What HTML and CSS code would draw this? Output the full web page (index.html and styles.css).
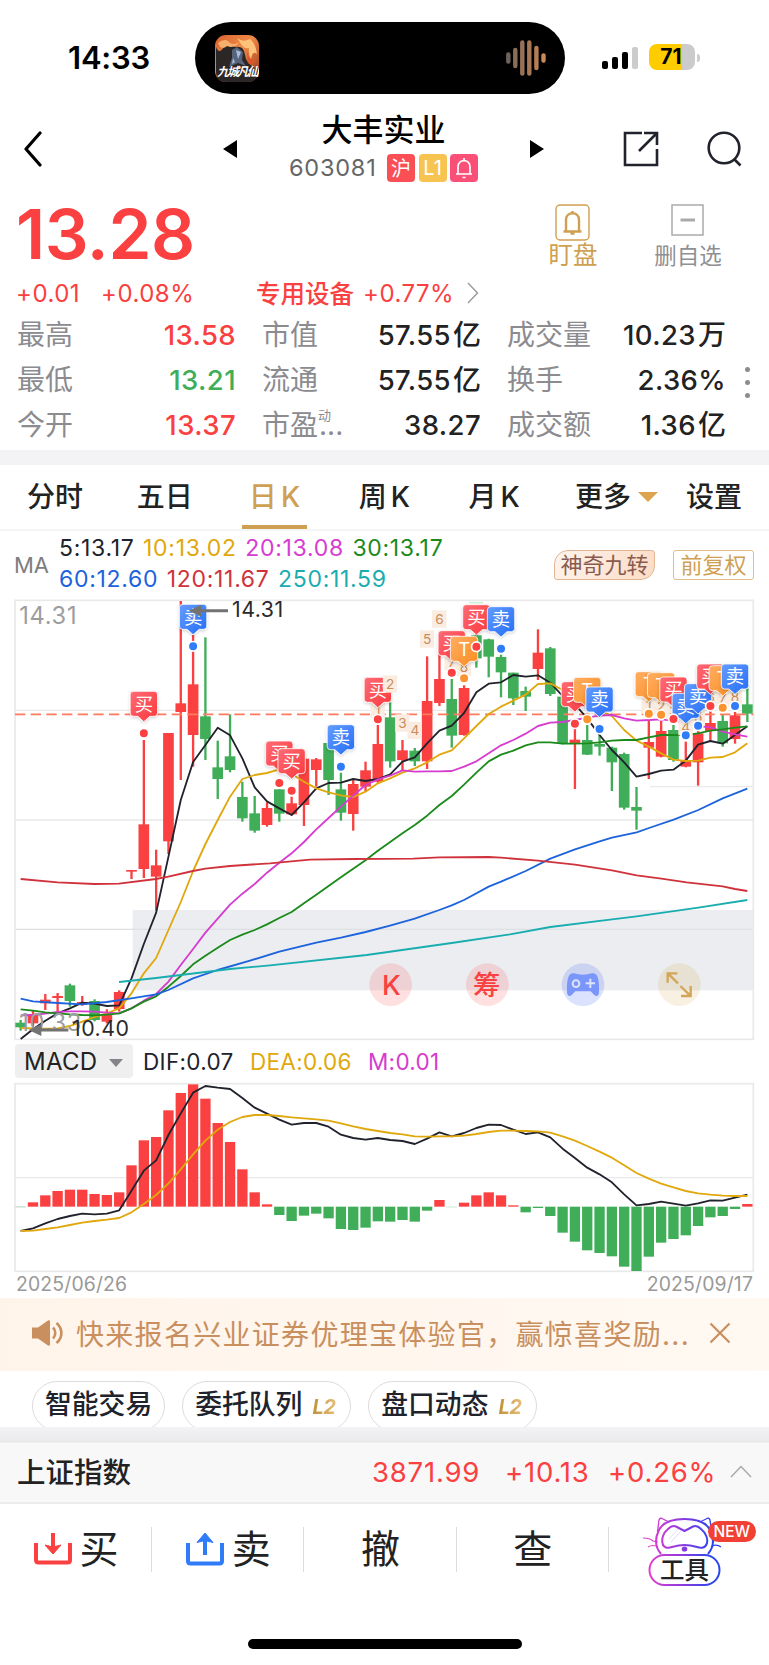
FILE: index.html
```html
<!DOCTYPE html>
<html lang="zh-CN">
<head>
    <meta charset="UTF-8">
    <meta name="viewport" content="width=device-width, initial-scale=1.0">
    <title>大丰实业 603081</title>
    <link rel="stylesheet" href="styles.css">
</head>
<body>
    <div class="status-bar">
        <div class="time">14:33</div>
        <div class="island">
            <svg class="app-icon" viewBox="0 0 44 47">
                <defs>
                    <linearGradient id="fire" x1="0" y1="0" x2="1" y2="1">
                        <stop offset="0" stop-color="#d9632f"/>
                        <stop offset="0.45" stop-color="#f08a48"/>
                        <stop offset="1" stop-color="#8f3219"/>
                    </linearGradient>
                </defs>
                <rect width="44" height="47" rx="11" fill="url(#fire)"/>
                <path d="M1 12Q4 20 9 12Q16 9 20 12Q29 10 30 20Q31 30 43 34V37Q42 47 33 47H11Q1 47 1 36Z" fill="#2b2727"/>
                <path d="M3 8Q9 3 13 6Q17 12 24 7Q20 14 12 11Q6 16 3 8" fill="#f6b06e"/>
                <path d="M22 3Q28 8 35 4Q41 9 42 19Q37 15 36 25Q33 19 34 13Q29 14 26 9Z" fill="#ffc27a"/>
                <path d="M32 17Q35 26 40 25Q38 31 33 28Z" fill="#e0562b"/>
                <path d="M17 15L22 12L28 17L27 25L31 31L23 28L14 32L17 23Z" fill="#56647c"/>
                <path d="M21 15L26 17L23 24ZM18 23L20 27L17 29Z" fill="#a9bdd8"/>
                <text x="2" y="41" class="app-name">九城凡仙</text>
            </svg>
            <svg class="wave" viewBox="0 0 40 36">
                <g stroke-width="4.4" stroke-linecap="round">
                    <path d="M2.3 14.5V21.5" stroke="#6d625c"/>
                    <path d="M9.3 10V26" stroke="#8a6d59"/>
                    <path d="M16.3 2.5V33.5" stroke="#987158"/>
                    <path d="M23.3 2.5V33.5" stroke="#a77856"/>
                    <path d="M30.4 8V28" stroke="#b67e55"/>
                    <path d="M37.5 15.5V20.5" stroke="#c88a58"/>
                </g>
            </svg>
        </div>
        <svg class="signal" viewBox="0 0 36 24">
            <rect x="0" y="15" width="6" height="8" rx="2"/>
            <rect x="10" y="11" width="6" height="12" rx="2"/>
            <rect x="20" y="6" width="6" height="17" rx="2"/>
            <rect x="30" y="1" width="6" height="22" rx="2" fill="#ccc"/>
        </svg>
        <div class="battery">71</div>
        <div class="battery-tip"></div>
    </div>

    <header class="nav">
        <svg class="back" viewBox="0 0 20 36"><path d="M17 2L3 18L17 34" fill="none" stroke="#000" stroke-width="3.2" stroke-linecap="round" stroke-linejoin="round"/></svg>
        <svg class="prev" viewBox="0 0 14 18"><path d="M14 0V18L0 9Z"/></svg>
        <div class="title">
            <h1>大丰实业</h1>
            <div class="code">
                <span>603081</span>
                <i class="tag red">沪</i>
                <i class="tag yellow">L1</i>
                <i class="tag pink">
                    <svg width="22" height="22" viewBox="0 0 22 22" fill="none" stroke="#fff" stroke-width="1.7"><path d="M3 17H19M5 17V10C5 1.500 17 1.500 17 10V17M11 1V4M9.500 20.500H12.500"/></svg>
                </i>
            </div>
        </div>
        <svg class="next" viewBox="0 0 14 18"><path d="M0 0V18L14 9Z"/></svg>
        <svg class="share" viewBox="0 0 36 36" fill="none" stroke="#20222c" stroke-width="2.6"><path d="M19 2H2V34H34V18M21 2H34V14M34 2L16 20"/></svg>
        <svg class="search" viewBox="0 0 36 36" fill="none" stroke="#20222c" stroke-width="2.6"><circle cx="17" cy="17" r="15.300"/><path d="M27.500 28.500L33.500 34.500"/></svg>
    </header>

    <section class="quote">
        <div class="quote-top">
            <div class="price">13.28</div>
            <div class="action watch">
                <svg width="36" height="38" viewBox="0 0 36 38" fill="none" stroke="#cfa052"><rect x="1" y="1" width="33" height="35" rx="4" stroke-width="1.400"/><path d="M8.500 27.500H26.500M11 27V16C11 7 24 7 24 16V27M17.500 7V10M15.500 29.500H19.500" stroke-width="2.400"/></svg>
                <span>盯盘</span>
            </div>
            <div class="action remove">
                <svg width="34" height="34" viewBox="0 0 34 34" fill="none" stroke="#aaa"><rect x="1" y="1" width="31" height="30" stroke-width="1.500"/><path d="M9.500 16H24" stroke-width="3"/></svg>
                <span>删自选</span>
            </div>
        </div>
        <div class="change">
            <span class="diff">+0.01</span>
            <span class="pct">+0.08%</span>
            <span class="sector">专用设备</span>
            <span class="sector-pct">+0.77%</span>
            <svg width="12" height="22" viewBox="0 0 12 22"><path d="M1 1L10.500 11L1 21" fill="none" stroke="#999" stroke-width="1.400"/></svg>
        </div>
        <div class="stats">
            <label>最高</label><b class="up">13.58</b>
            <label>市值</label><b>57.55<em>亿</em></b>
            <label>成交量</label><b>10.23<em>万</em></b>
            <label>最低</label><b class="down">13.21</b>
            <label>流通</label><b>57.55<em>亿</em></b>
            <label>换手</label><b>2.36%</b>
            <label>今开</label><b class="up">13.37</b>
            <label>市盈<sup>动</sup><span class="dots">...</span></label><b>38.27</b>
            <label>成交额</label><b>1.36<em>亿</em></b>
            <div class="more-dots"><i></i><i></i><i></i></div>
        </div>
    </section>

    <nav class="tabs">
        <a>分时</a>
        <a>五日</a>
        <a class="active">日<span>K</span></a>
        <a>周<span>K</span></a>
        <a>月<span>K</span></a>
        <a class="more">更多<i class="arrow"></i></a>
        <a class="setting">设置</a>
    </nav>

    <div class="ma-bar">
        <span class="ma-name">MA</span>
        <div class="ma-values">
            <div><span class="ma5">5:13.17</span><span class="ma10">10:13.02</span><span class="ma20">20:13.08</span><span class="ma30">30:13.17</span></div>
            <div><span class="ma60">60:12.60</span><span class="ma120">120:11.67</span><span class="ma250">250:11.59</span></div>
        </div>
        <span class="nine">神奇九转</span>
        <span class="adjust">前复权</span>
    </div>

    <svg class="kline" id="kline" viewBox="0 27 2307 1326"></svg>

    <div class="macd-bar">
        <div class="macd-select">MACD<i></i></div>
        <span class="dif">DIF:0.07</span>
        <span class="dea">DEA:0.06</span>
        <span class="m">M:0.01</span>
    </div>

    <svg class="macd" id="macd" viewBox="0 126 2307 573"></svg>

    <div class="dates"><span>2025/06/26</span><span>2025/09/17</span></div>

    <div class="notice">
        <svg class="horn" viewBox="0 0 32 28"><path d="M0 8.500H6L16 1.500C17 1 18 1.500 18 2.500V25.500C18 26.500 17 27 16 26.500L6 19.500H0Z" fill="#c98f5e"/><path d="M21 8.500C24 11.500 24 16.500 21 19.500M24.500 4C31 9.500 31 18.500 24.500 24" fill="none" stroke="#c98f5e" stroke-width="2.600"/></svg>
        <span class="notice-text">快来报名兴业证券优理宝体验官，赢惊喜奖励...</span>
        <svg class="close" viewBox="0 0 22 22"><path d="M1.500 1.500L20.500 20.500M20.500 1.500L1.500 20.500" stroke="#c98f5e" stroke-width="2.200"/></svg>
    </div>

    <div class="chips">
        <div class="chip">智能交易</div>
        <div class="chip">委托队列<i>L2</i></div>
        <div class="chip">盘口动态<i>L2</i></div>
    </div>

    <div class="index-bar">
        <span class="index-name">上证指数</span>
        <span class="index-value">3871.99</span>
        <span class="index-diff">+10.13</span>
        <span class="index-pct">+0.26%</span>
        <svg width="22" height="13" viewBox="0 0 22 13"><path d="M1 12L11 1.500L21 12" fill="none" stroke="#aaa" stroke-width="1.500"/></svg>
    </div>

    <footer class="toolbar">
        <div class="tool">
            <svg width="38" height="32" viewBox="0 0 38 32" fill="none" stroke="#fa4040" stroke-width="4"><path d="M2 10V27Q2 29.500 4.500 29.500H33.500Q36 29.500 36 27V10"/><path d="M19 0V14"/><path d="M11 12L19 21L27 12L19 14Z" fill="#fa4040" stroke-width="1"/></svg>
            <span>买</span>
        </div>
        <div class="tool">
            <svg width="38" height="34" viewBox="0 0 38 34" fill="none" stroke="#2f7bf8" stroke-width="4"><path d="M2 11V29Q2 31.500 4.500 31.500H33.500Q36 31.500 36 29V11"/><path d="M19 23V7"/><path d="M11 10.500L19 1L27 10.500L19 8.500Z" fill="#2f7bf8" stroke-width="1"/></svg>
            <span>卖</span>
        </div>
        <div class="tool"><span>撤</span></div>
        <div class="tool"><span>查</span></div>
        <div class="tool cat">
            <svg width="80" height="72" viewBox="0 0 80 72" fill="none" stroke="url(#neon)" stroke-width="2">
                <defs>
                    <linearGradient id="neon" gradientUnits="userSpaceOnUse" x1="4" y1="0" x2="76" y2="0">
                        <stop offset="0.05" stop-color="#e13bd0"/>
                        <stop offset="0.5" stop-color="#8a3be0"/>
                        <stop offset="0.9" stop-color="#2a45ee"/>
                    </linearGradient>
                </defs>
                <path d="M18 39C12 32 12 23 16 15C20 7 29 4 41.500 4S63 7 67 15C71 23 71 32 65 39"/>
                <path d="M14.500 17L16 5Q17 2 20 4L26 7M68.500 17L67 5Q66 2 63 4L57 7" stroke-width="1.300"/>
                <path d="M41.500 16L50 11.500Q54 10 58 14C63 18 65 24 64 28C63 33 58 33.500 54 32Q47 30 41.500 30T29 32C25 33.500 20 33 19.500 28C18.500 24 20 18 25 14Q29 10 33 11.500Z"/>
                <path d="M0 23Q7 23 10 26L15 27M5 32Q10 29 15 32M69 27L77 22M69 31Q74 29 78 32" stroke-width="1.200"/>
                <path d="M26 24L35 14M28 27L38 16" stroke="#e2ddfc" stroke-width="1"/>
                <ellipse cx="41.500" cy="34" rx="1.800" ry="1.600" fill="#7a39df"/>
                <rect x="6.500" y="40" width="70" height="30" rx="15" fill="#fff"/>
                <text x="41.500" y="64" class="cat-text">工具</text>
            </svg>
            <em class="new">NEW</em>
        </div>
    </footer>
    <div class="home-indicator"></div>

    <script src="chart.js"></script>
</body>
</html>
```
FILE: styles.css
```css
* {
    box-sizing: border-box;
}
body {
    margin: 0;
    width: 769px;
    height: 1665px;
    overflow: hidden;
    background: #fff;
    color: #222;
    font-family: Inter, "Noto Sans CJK SC", sans-serif;
}
svg {
    display: block;
    flex: none;
}
i, em {
    font-style: normal;
}
span, b, label, i, a {
    white-space: nowrap;
}

/* status bar */
.status-bar {
    display: flex;
    align-items: center;
    height: 94px;
    padding: 22px 0 0 68px;
}
.time {
    width: 127px;
    margin-top: -2px;
    color: #000;
    font-size: 31px;
    font-weight: 600;
    letter-spacing: -0.2px;
}
.island {
    display: flex;
    align-items: center;
    justify-content: space-between;
    width: 370px;
    height: 72px;
    padding: 0 19px 0 20px;
    border-radius: 36px;
    background: #000;
}
.app-icon {
    width: 44px;
    height: 47px;
}
.app-name {
    fill: #fff;
    font-size: 12px;
    font-weight: 700;
    font-style: italic;
    letter-spacing: -2px;
}
.wave {
    width: 40px;
    height: 36px;
}
.signal {
    width: 36px;
    height: 24px;
    margin: -1px 0 0 37px;
}
.battery {
    width: 46px;
    height: 26px;
    margin: -2px 0 0 11px;
    padding-right: 2px;
    border-radius: 8px;
    background: linear-gradient(90deg, #ffcc00 72%, #cbcbcb 72%);
    color: #000;
    font-size: 21px;
    font-weight: 700;
    line-height: 26px;
    text-align: center;
}
.battery-tip {
    width: 3px;
    height: 8px;
    margin-left: 2px;
    border-radius: 0 4px 4px 0;
    background: #ccc;
}

/* title bar */
.nav {
    display: flex;
    align-items: center;
    height: 106px;
    padding: 0 26px 0 23px;
}
.back {
    width: 20px;
    height: 36px;
    margin-top: 3px;
}
.prev, .next {
    width: 14px;
    height: 18px;
    margin-top: 3px;
}
.prev {
    margin-left: 180px;
}
.title {
    width: 293px;
    margin-top: -1px;
    text-align: center;
}
.title h1 {
    margin: 0;
    color: #000;
    font-size: 31px;
    font-weight: 500;
    line-height: 42px;
}
.code {
    display: flex;
    align-items: center;
    justify-content: center;
    gap: 3.5px;
    height: 34px;
    color: #666;
    font-size: 23.5px;
}
.code span {
    margin-right: 7px;
    letter-spacing: 0.8px;
}
.tag {
    display: flex;
    align-items: center;
    justify-content: center;
    width: 28px;
    height: 28px;
    border-radius: 4px;
    color: #fff;
    font-size: 20px;
}
.red { background: #fa5055; }
.yellow { background: #f7c451; }
.pink { background: #fa5078; }
.share {
    width: 36px;
    height: 36px;
    margin: 3px 0 0 79px;
}
.search {
    width: 36px;
    height: 36px;
    margin: 3px 0 0 auto;
}

/* quote */
.quote {
    height: 265px;
    border-bottom: 15px solid #f3f3f6;
}
.quote-top {
    display: flex;
    height: 75px;
    padding-left: 16px;
}
.price {
    width: 530px;
    color: #fa4040;
    font-size: 69px;
    font-weight: 600;
    letter-spacing: -0.4px;
    line-height: 69px;
}
.action {
    display: flex;
    flex-direction: column;
    align-items: center;
    padding-top: 4px;
    line-height: 26px;
}
.watch {
    width: 54px;
    color: #cfa052;
    font-size: 24.5px;
}
.remove {
    width: 72px;
    margin-left: 52px;
    color: #8f8f94;
    font-size: 22.5px;
}
.remove span {
    padding-top: 5px;
}
.change {
    display: flex;
    align-items: center;
    height: 36px;
    padding-left: 16px;
    color: #fa4040;
    font-size: 24px;
    letter-spacing: 0.5px;
}
.diff { width: 85px; }
.pct { width: 155px; }
.sector {
    width: 107px;
    margin-top: -2px;
    font-size: 24.5px;
    font-weight: 500;
    letter-spacing: 0;
}
.sector-pct { width: 104px; }
.stats {
    position: relative;
    display: grid;
    grid-template-columns: 110px 109px 115px 130px 115px 130px;
    grid-template-rows: repeat(3, 45px);
    padding: 2px 0 0 17px;
    line-height: 45px;
}
.stats label {
    color: #8b8b90;
    font-size: 28px;
}
.stats label:nth-of-type(3n+2),
.stats label:nth-of-type(3n) {
    padding-left: 26px;
}
.stats b {
    display: flex;
    justify-content: flex-end;
    font-size: 27.5px;
    font-weight: 500;
    letter-spacing: 0.4px;
}
.stats em {
    padding-left: 2px;
    font-size: 28px;
    letter-spacing: 0;
}
.stats .up { color: #fa4040; }
.stats .down { color: #40ae58; }
.stats sup {
    font-size: 13px;
    line-height: 0;
    vertical-align: 15px;
}
.dots {
    margin-left: -12px;
}
.more-dots {
    position: absolute;
    top: 56px;
    left: 745px;
    display: flex;
    flex-direction: column;
    gap: 8px;
}
.more-dots i {
    width: 5px;
    height: 5px;
    border-radius: 50%;
    background: #8b8b90;
}

/* period tabs */
.tabs {
    display: flex;
    height: 66px;
    border-bottom: 2px solid #f5f5f6;
    font-size: 28px;
    font-weight: 500;
    line-height: 65px;
}
.tabs a {
    display: flex;
    justify-content: center;
    width: 109.8px;
}
.tabs span {
    margin-left: 4px;
    font-size: 28px;
}
.tabs .active {
    color: #cfa052;
    background: linear-gradient(#cfa052, #cfa052) 50% 100% / 65px 4px no-repeat;
}
.tabs .more {
    align-items: center;
    justify-content: flex-start;
    width: 110px;
    margin-left: 26px;
}
.arrow {
    margin-left: 7px;
    border: 10px solid transparent;
    border-top-color: #dda450;
    border-bottom: 0;
}
.tabs .setting {
    width: 58px;
}

/* moving averages */
.ma-bar {
    display: flex;
    align-items: center;
    height: 68px;
    padding: 0 15px 0 14px;
    font-size: 22px;
}
.ma-name {
    width: 45px;
    color: #7d7d82;
}
.ma-values {
    width: 495px;
    margin-top: -2px;
    font-size: 23px;
    letter-spacing: 0.7px;
    line-height: 31px;
}
.ma-values div {
    display: flex;
    gap: 8.5px;
}
.ma5 { color: #20222c; }
.ma10 { color: #e0a80c; }
.ma20 { color: #d63cd0; }
.ma30 { color: #1b8a1b; }
.ma60 { color: #1c63dc; }
.ma120 { color: #d0323c; }
.ma250 { color: #19adb0; }
.nine, .adjust {
    height: 30px;
    font-size: 22px;
    line-height: 28px;
    text-align: center;
}
.nine {
    width: 101px;
    border: 1px solid #e2b694;
    border-radius: 14px 3px 14px 3px;
    background: linear-gradient(110deg, #fdf3ec, #fbdcc5);
    color: #8a5a4e;
}
.adjust {
    width: 81px;
    margin-left: 18px;
    border: 1.5px solid #dfbf85;
    border-radius: 3px;
    color: #cfa052;
}

/* charts */
.kline {
    width: 769px;
    height: 442px;
}
.macd {
    width: 769px;
    height: 191px;
}
.box {
    fill: none;
    stroke: #e9e9ea;
    stroke-width: 5;
}
.grid {
    stroke: #e9e9ea;
    stroke-width: 4;
}
.line {
    fill: none;
    stroke-width: 5.5;
    stroke-linejoin: round;
}
.pin-text {
    fill: #fff;
    font-size: 55px;
    text-anchor: middle;
}
.turn {
    fill: #c98d5a;
    font-size: 41px;
    text-anchor: middle;
}
.limit {
    fill: #9d9d9f;
    font-size: 71px;
    letter-spacing: 2px;
}
.extreme {
    fill: #2a2a2d;
    font-size: 64px;
    letter-spacing: 1.5px;
}
.round-text {
    fill: #fa4040;
    font-size: 82px;
    font-weight: 500;
    text-anchor: middle;
}

.macd-bar {
    display: flex;
    align-items: center;
    height: 41px;
    padding: 0 0 1px 15px;
    font-size: 22.5px;
    letter-spacing: 0.3px;
}
.macd-select {
    display: flex;
    align-items: center;
    width: 118px;
    height: 34px;
    padding-left: 9px;
    border-radius: 4px;
    background: #efefef;
    color: #222;
    font-size: 24px;
}
.macd-select i {
    margin: 3px 0 0 12px;
    border: 7.5px solid transparent;
    border-top: 8px solid #838388;
    border-bottom: 0;
}
.dif {
    width: 107px;
    margin-left: 10px;
    color: #20222c;
}
.dea {
    width: 118px;
    color: #e0a80c;
}
.m {
    color: #d63cd0;
}
.dates {
    display: flex;
    justify-content: space-between;
    height: 25px;
    padding: 0 16px;
    color: #999;
    font-size: 19.4px;
    letter-spacing: 0.15px;
    line-height: 22px;
}

/* notice */
.notice {
    display: flex;
    align-items: center;
    height: 73px;
    padding: 0 0 3px 32px;
    background: linear-gradient(90deg, #fff4ea, #fff9f2);
    color: #c98f5e;
}
.horn {
    width: 32px;
    height: 28px;
    margin-right: 12px;
}
.notice-text {
    width: 633px;
    font-size: 28px;
    letter-spacing: 1.3px;
}
.close {
    width: 22px;
    height: 22px;
}

.chips {
    display: flex;
    align-items: flex-start;
    gap: 17px;
    height: 56px;
    padding: 10px 0 0 32px;
    overflow: hidden;
}
.chip {
    height: 50px;
    padding: 0 12px;
    border: 1px solid #dcdce0;
    border-radius: 25px;
    color: #20222c;
    font-size: 26.8px;
    font-weight: 500;
    line-height: 45px;
}
.chip i {
    padding: 0 3px 0 10px;
    background: linear-gradient(90deg, #ad7d1e, #e9c27d);
    background-clip: text;
    -webkit-background-clip: text;
    color: transparent;
    font-size: 20px;
    font-style: italic;
    font-weight: 700;
    letter-spacing: -0.5px;
}

/* index */
.index-bar {
    display: flex;
    align-items: center;
    height: 77px;
    padding: 14px 0 0 17px;
    border-bottom: 2px solid #ececec;
    background: linear-gradient(#f3f3f6, #ebebed 14px, #dfdfdf 14px, #f8f8f8 16px);
    color: #fa4040;
    font-size: 27.5px;
    letter-spacing: 0.8px;
}
.index-name {
    width: 355px;
    margin-top: -2px;
    color: #222;
    font-size: 28.5px;
    font-weight: 500;
    letter-spacing: 0;
}
.index-value { width: 133px; }
.index-diff { width: 103px; }
.index-pct { width: 122px; }

/* bottom toolbar */
.toolbar {
    display: flex;
    height: 90px;
}
.tool {
    display: flex;
    align-items: center;
    justify-content: center;
    gap: 8px;
    width: 152.2px;
    background: linear-gradient(#dcdcdf, #dcdcdf) 100% 50% / 1px 45px no-repeat;
    font-size: 39px;
    line-height: 86px;
}
.cat {
    position: relative;
    align-items: flex-start;
    justify-content: flex-start;
    width: 160px;
    background: none;
}
.cat svg {
    margin: 11px 0 0 34px;
}
.cat-text {
    fill: #222;
    stroke: none;
    font-size: 24.5px;
    font-weight: 500;
    text-anchor: middle;
}
.new {
    position: absolute;
    top: 17px;
    left: 99px;
    width: 48px;
    height: 21px;
    border-radius: 11px;
    background: #f04134;
    color: #fff;
    font-size: 15.5px;
    font-weight: 500;
    line-height: 21px;
    text-align: center;
}
.home-indicator {
    width: 274px;
    height: 10px;
    margin: 45px 0 0 248px;
    border-radius: 5px;
    background: #000;
}
```
FILE: chart.js
```js
const RED = '#fa4040';
const GREEN = '#40ae58';
const BLUE = '#2f7bf8';
const ORANGE = '#fb9430';

const xAt = i => 62 + i * 36.95;

// body top, body bottom, high, low, rising
const candles = [
    [1298, 1312, 1290, 1322, 0], [1272, 1300, 1260, 1310, 1], [1229, 1240, 1212, 1260, 1],
    [1218, 1224, 1209, 1265, 1], [1186, 1233, 1181, 1250, 0], [1236, 1241, 1218, 1247, 1],
    [1233, 1290, 1228, 1294, 0], [1272, 1295, 1258, 1300, 1], [1206, 1257, 1201, 1265, 1],
    [840, 845, 840, 867, 1], [703, 837, 450, 864, 1], [826, 860, 779, 962, 1],
    [429, 754, 429, 792, 1], [340, 366, 33, 570, 1], [283, 435, 135, 530, 1],
    [379, 447, 142, 510, 0], [532, 567, 452, 627, 0], [499, 540, 373, 547, 0],
    [621, 685, 575, 695, 0], [670, 722, 618, 728, 0], [654, 705, 637, 710, 1],
    [598, 671, 598, 695, 0], [640, 673, 620, 676, 1], [506, 645, 504, 708, 1],
    [508, 540, 504, 590, 1], [459, 570, 459, 615, 0], [598, 668, 548, 692, 0],
    [582, 672, 570, 722, 1], [541, 590, 515, 603, 1], [462, 575, 405, 578, 1],
    [382, 514, 337, 533, 0], [481, 510, 450, 543, 1], [482, 514, 474, 528, 0],
    [333, 514, 199, 537, 1], [267, 339, 170, 348, 1], [327, 437, 267, 473, 0],
    [294, 435, 286, 437, 1], [136, 205, 130, 233, 0], [148, 200, 146, 262, 0],
    [201, 247, 194, 322, 0], [248, 325, 248, 345, 0], [303, 320, 290, 363, 0],
    [188, 237, 118, 270, 1], [175, 312, 171, 318, 0], [320, 460, 310, 463, 0],
    [449, 462, 415, 597, 1], [450, 494, 405, 495, 0], [462, 470, 435, 497, 0],
    [473, 517, 470, 603, 0], [492, 653, 488, 659, 0], [651, 662, 591, 719, 0],
    [456, 473, 390, 567, 1], [423, 500, 393, 502, 1], [420, 510, 405, 515, 0],
    [510, 530, 455, 532, 1], [430, 517, 420, 587, 1], [399, 423, 360, 455, 1],
    [393, 460, 375, 470, 0], [376, 447, 366, 461, 1], [343, 371, 295, 396, 0]
];

const ma5 = [1347, 1318, 1292, 1270, 1255, 1238, 1241, 1248, 1246, 1165, 1062, 968, 800, 630, 516, 465, 413, 436, 505, 592, 634, 655, 675, 637, 595, 579, 578, 567, 573, 567, 553, 515, 502, 460, 422, 407, 369, 307, 281, 277, 255, 260, 256, 278, 318, 343, 385, 435, 480, 517, 560, 552, 542, 539, 512, 464, 453, 461, 435, 409];
const ma10 = [1314, 1315, 1316, 1315, 1308, 1295, 1281, 1270, 1255, 1210, 1150, 1104, 1020, 936, 843, 762, 690, 620, 567, 555, 549, 538, 552, 575, 595, 607, 616, 621, 605, 580, 565, 548, 535, 517, 494, 481, 445, 408, 372, 350, 332, 314, 282, 280, 300, 325, 345, 360, 378, 420, 452, 470, 490, 509, 513, 512, 503, 501, 487, 460];
const ma20 = [1276, 1275, 1271, 1266, 1264, 1264, 1265, 1268, 1270, 1255, 1232, 1212, 1175, 1125, 1077, 1028, 986, 944, 911, 882, 848, 818, 790, 756, 718, 684, 650, 617, 585, 568, 557, 541, 545, 544, 544, 543, 530, 514, 490, 466, 450, 431, 408, 398, 396, 390, 383, 377, 375, 385, 392, 390, 388, 392, 400, 408, 412, 425, 433, 440];
const ma30 = [1258, 1262, 1267, 1270, 1273, 1275, 1276, 1274, 1270, 1255, 1235, 1219, 1190, 1158, 1123, 1097, 1073, 1050, 1034, 1020, 1003, 984, 966, 940, 914, 888, 862, 836, 811, 782, 756, 730, 705, 677, 645, 618, 584, 548, 514, 494, 482, 466, 457, 457, 461, 461, 460, 457, 452, 450, 450, 442, 435, 435, 435, 430, 422, 418, 413, 409];

// slow averages as x,y pairs
const ma60 = '62,1226 99,1234 173,1239 247,1243 320,1236 394,1225 468,1213 505,1200 579,1165 653,1140 750,1112 838,1085 949,1058 1023,1043 1097,1026 1170,1007 1244,986 1318,960 1355,946 1392,930 1466,890 1503,875 1577,843 1651,806 1725,778 1799,754 1836,743 1910,727 1947,714 2021,689 2095,660 2168,625 2242,596';
const ma120 = '62,867 173,877 284,882 357,881 468,867 505,860 579,843 616,836 690,828 810,820 930,809 1060,807 1240,806 1318,802 1466,801 1503,803 1614,812 1725,824 1836,841 1910,856 1984,866 2060,877 2168,889 2205,897 2242,903';
const ma250 = '357,1176 468,1164 542,1155 616,1146 690,1137 810,1126 1100,1095 1355,1059 1530,1033 1651,1011 1836,988 1910,979 2095,953 2242,930';

// candle index, top of the bubble, label
const pins = [
    [10, 304, '买'], [14, 43, '卖'], [21, 453, '买'], [22, 476, '买'], [26, 404, '卖'],
    [29, 262, '买'], [35, 122, '买'], [36, 139, 'T'], [37, 44, '买'], [39, 50, '卖'],
    [45, 275, '买'], [46, 262, 'T'], [47, 291, '卖'], [51, 245, 'T'], [52, 248, 'T'],
    [53, 261, '买'], [54, 310, '卖'], [55, 281, '卖'], [56, 222, '买'], [57, 227, 'T'], [58, 222, '卖']
];

// candle index, centre, count
const turns = [
    [29, 358, 1], [31, 399, 3], [32, 421, 4], [33, 147, 5], [34, 87, 6], [35, 215, 7], [36, 232, 8],
    [51, 345, 1], [52, 348, 2], [53, 362, 3], [54, 410, 4], [55, 380, 5], [56, 320, 6], [57, 325, 7], [58, 320, 8]
];

const bars = [502, 487, 466, 453, 449, 449, 462, 465, 457, 376, 301, 291, 211, 159, 133, 176, 249, 306, 388, 457, 493, 525, 543, 527, 521, 535, 567, 570, 563, 544, 545, 540, 545, 512, 480, 502, 488, 466, 457, 466, 496, 517, 504, 528, 578, 605, 631, 639, 649, 680, 693, 650, 608, 597, 586, 558, 532, 528, 507, 492];
const dif = [573, 565, 550, 537, 528, 521, 523, 521, 511, 452, 392, 361, 285, 220, 158, 138, 143, 147, 174, 203, 221, 239, 254, 249, 249, 260, 284, 294, 299, 294, 300, 303, 312, 296, 277, 289, 279, 264, 254, 255, 269, 282, 277, 292, 326, 354, 383, 403, 427, 463, 496, 492, 485, 491, 497, 490, 481, 482, 473, 464];
const dea = [573, 572, 567, 562, 555, 548, 543, 539, 534, 517, 492, 465, 430, 388, 343, 302, 269, 246, 231, 225, 225, 228, 232, 235, 238, 242, 250, 259, 267, 273, 279, 283, 289, 290, 289, 289, 287, 282, 276, 272, 272, 273, 274, 278, 289, 302, 318, 335, 353, 376, 399, 416, 431, 442, 453, 460, 464, 467, 468, 468];

function line(data, color) {
    const points = typeof data === 'string' ? data : data.map((y, i) => `${xAt(i)},${y}`).join(' ');
    return `<polyline class="line" points="${points}" stroke="${color}"/>`;
}

function candle([top, bottom, high, low, up], i) {
    const x = xAt(i);
    const color = up ? RED : GREEN;
    return `<path d="M${x} ${high}V${low}" stroke="${color}" stroke-width="7"/>
        <rect x="${x - 16}" y="${top}" width="32" height="${bottom - top}" fill="${color}"/>`;
}

function turn([i, y, n]) {
    return `<rect x="${xAt(i) - 22}" y="${y - 26}" width="43" height="52" fill="#faece1"/>
        <text class="turn" x="${xAt(i)}" y="${y + 15}">${n}</text>`;
}

function pin([i, y, label]) {
    const x = xAt(i);
    const fill = { '买': 'buy', '卖': 'sell', 'T': 'both' }[label];
    return `<path d="M${x - 31} ${y}H${x + 31}Q${x + 41} ${y} ${x + 41} ${y + 10}V${y + 65}Q${x + 41} ${y + 75} ${x + 31} ${y + 75}H${x + 18}L${x} ${y + 91}L${x - 18} ${y + 75}H${x - 31}Q${x - 41} ${y + 75} ${x - 41} ${y + 65}V${y + 10}Q${x - 41} ${y} ${x - 31} ${y}Z"
            fill="url(#${fill})" stroke="#fff" stroke-opacity="0.8" stroke-width="3" filter="url(#shade)"/>
        <text class="pin-text" x="${x}" y="${y + 58}">${label}</text>`;
}

function dot([i, y, label]) {
    const color = { '买': RED, '卖': BLUE, 'T': ORANGE }[label];
    return `<circle cx="${xAt(i)}" cy="${y + 126}" r="14.5" fill="${color}" stroke="#fff" stroke-width="5"/>`;
}

function gradient(id, from, to) {
    return `<linearGradient id="${id}" x1="0" y1="0" x2="1" y2="1"><stop offset="0" stop-color="${from}"/><stop offset="1" stop-color="${to}"/></linearGradient>`;
}

document.getElementById('kline').innerHTML = `
    <defs>
        ${gradient('buy', '#ff6b75', '#fa383c')}
        ${gradient('sell', '#659cff', '#226df6')}
        ${gradient('both', '#ffae63', '#fa8c20')}
        <filter id="shade" x="-20%" y="-20%" width="140%" height="150%"><feDropShadow dx="0" dy="4" stdDeviation="5" flood-opacity="0.18"/></filter>
    </defs>
    <rect x="398" y="960" width="1862" height="241" fill="#ebedf1"/>
    <path class="grid" d="M45 361H2260M45 690H2260M1950 590H2260"/>
    <path d="M45 1018H2260" stroke="#dfe0e4" stroke-width="4"/>
    <rect class="box" x="45" y="31" width="2215" height="1317"/>
    ${candles.map(candle).join('')}
    <path d="M1408 38H1450" stroke="#d5eeda" stroke-width="5"/>
    <path d="M45 373H2260" stroke="#ff7a5c" stroke-width="5" stroke-dasharray="31 16"/>
    ${line(ma5, '#20222c')}
    ${line(ma10, '#e0a80c')}
    ${line(ma20, '#d63cd0')}
    ${line(ma30, '#1b8a1b')}
    ${line(ma60, '#1c63dc')}
    ${line(ma120, '#d0323c')}
    ${line(ma250, '#19adb0')}
    ${turns.map(turn).join('')}
    ${pins.map(pin).join('')}
    ${pins.map(dot).join('')}
    ${turn([30, 282, 2])}
    <text class="limit" x="58" y="103">14.31</text>
    <text class="limit" x="58" y="1323">10.33</text>
    <path d="M600 62H684M120 1320H205" stroke="#737373" stroke-width="9"/>
    <path d="M566 62L604 44V80ZM86 1320L124 1302V1338Z" fill="#737373"/>
    <text class="extreme" x="696" y="80">14.31</text>
    <text class="extreme" x="216" y="1337">10.40</text>
    <g>
        <circle cx="1172" cy="1184" r="64" fill="${RED}" fill-opacity="0.16"/>
        <text class="round-text" x="1174" y="1216">K</text>
        <circle cx="1462" cy="1184" r="64" fill="${RED}" fill-opacity="0.16"/>
        <text class="round-text" x="1460" y="1215">筹</text>
        <circle cx="1749" cy="1184" r="64" fill="#4d6ff5" fill-opacity="0.2"/>
        <path d="M1722 1150Q1749 1158 1776 1150C1794 1148 1798 1168 1797 1208Q1794 1224 1782 1214L1772 1204H1726L1716 1214Q1704 1224 1701 1208C1700 1168 1704 1148 1722 1150Z" fill="#7b96fa"/>
        <circle cx="1728" cy="1181" r="10" fill="none" stroke="#dde3fc" stroke-width="6"/>
        <path d="M1757 1180H1785M1771 1166V1194" stroke="#dde3fc" stroke-width="6"/>
        <circle cx="2038" cy="1184" r="64" fill="#d6a64a" fill-opacity="0.17"/>
        <path d="M2003 1178V1150H2032M2004 1151L2034 1180M2072 1188V1218H2043M2071 1217L2041 1188" fill="none" stroke="#d3a558" stroke-width="7"/>
    </g>`;

document.getElementById('macd').innerHTML = `
    <path class="grid" d="M45 413H2260"/>
    <path d="M45 500H76" class="grid"/>
    <rect class="box" x="45" y="131" width="2215" height="563"/>
    ${bars.map((y, i) => `<rect x="${xAt(i) - 15.5}" y="${Math.min(y, 500)}" width="31" height="${Math.abs(y - 500)}" fill="${y < 500 ? RED : GREEN}"${Math.abs(y - 500) < 3 ? ' opacity="0.4"' : ''}/>`).join('')}
    ${line(dif, '#20222c')}
    ${line(dea, '#e0a80c')}`;
```
